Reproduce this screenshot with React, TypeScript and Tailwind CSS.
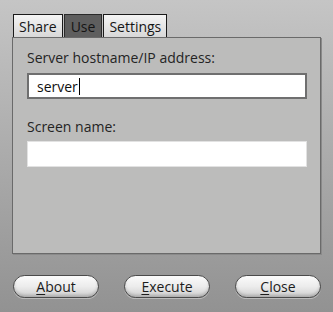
import React from "react";

const tabs = ["Share", "Use", "Settings"];
const active = "Use";

function PillButton({ label }: { label: string }) {
  return (
    <button className="w-[86px] h-[23px] rounded-full border border-[#4a4a4a] bg-gradient-to-b from-[#fbfbfb] via-[#ececec] to-[#cfcfcf] shadow-[inset_0_-2px_3px_rgba(0,0,0,0.18),0_1px_0_rgba(255,255,255,0.35)] text-[14px] text-[#1c1c1c] leading-none">
      <span className="underline underline-offset-2">{label[0]}</span>
      {label.slice(1)}
    </button>
  );
}

export default function App() {
  return (
    <div
      className="w-[333px] h-[312px] bg-gradient-to-b from-[#c5c5c5] to-[#929292] overflow-hidden"
      style={{ fontFamily: '"Open Sans", "Noto Sans", sans-serif' }}
    >
      <div className="pt-[14px] px-[12px]">
        {/* Tabs */}
        <div className="flex gap-px pl-px">
          {tabs.map((t) => (
            <div
              key={t}
              className={
                t === active
                  ? "h-[23px] px-[6px] flex items-center border border-b-0 border-[#2a2a2a] bg-[#5e5e5e] text-[14px] text-[#151515]"
                  : "h-[23px] px-[5px] flex items-center border border-b-0 border-[#1a1a1a] bg-gradient-to-b from-[#f4f4f4] to-[#d8d8d8] text-[14px] text-[#151515]"
              }
            >
              {t}
            </div>
          ))}
        </div>

        {/* Panel */}
        <div className="h-[217px] border border-[#6a6a6a] bg-[#bcbcbb] shadow-[1px_1px_0_#8a8a8a] pt-[10px] px-[14px] pr-[13px]">
          <div className="text-[14px] text-[#242424] leading-[19px]">Server hostname/IP address:</div>
          <div className="mt-[6px] h-[26px] border-2 border-[#6f6f6f] bg-white flex items-center pl-[8px] text-[14px] text-[#101010]">
            server
            <span className="w-px h-[17px] bg-black ml-px" />
          </div>
          <div className="mt-[18px] text-[14px] text-[#242424] leading-[19px]">Screen name:</div>
          <div className="mt-[5px] h-[26px] border border-[#e2e2e2] bg-white" />
        </div>

        {/* Buttons */}
        <div className="mt-[21px] flex justify-between pl-px pr-0">
          <PillButton label="About" />
          <PillButton label="Execute" />
          <PillButton label="Close" />
        </div>
      </div>
    </div>
  );
}
